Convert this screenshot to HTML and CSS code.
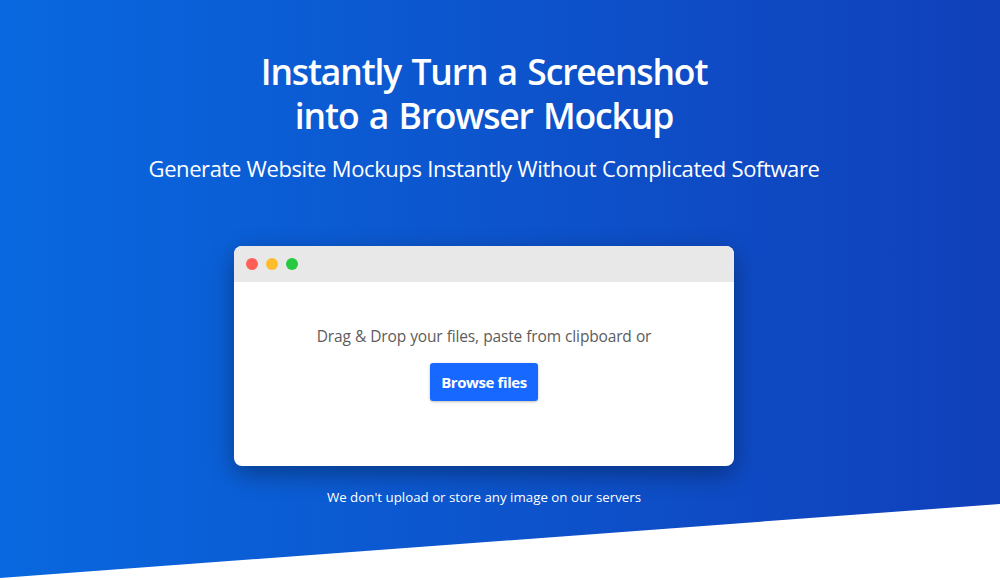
FILE: index.html
```html
<!DOCTYPE html>
<html lang="en">
<head>
<meta charset="utf-8">
<title>Browser Mockup</title>
<link rel="stylesheet" href="styles.css">
</head>
<body>
<main class="hero">
  <div class="content">
    <h1 class="title">Instantly Turn a Screenshot<br>into a Browser Mockup</h1>
    <p class="subtitle">Generate Website Mockups Instantly Without Complicated Software</p>
    <section class="window">
      <div class="titlebar"><i class="dot red"></i><i class="dot yellow"></i><i class="dot green"></i></div>
      <div class="dropzone">
        <p class="hint">Drag &amp; Drop your files, paste from clipboard or</p>
        <button class="browse" type="button">Browse files</button>
      </div>
    </section>
    <p class="note">We don't upload or store any image on our servers</p>
  </div>
</main>
</body>
</html>
```
FILE: styles.css
```css
* { box-sizing: border-box; }
body {
  margin: 0;
  height: 580px;
  overflow: hidden;
  background: #fff;
  font-family: "Segoe UI", "Open Sans", "Noto Sans", sans-serif;
}
.hero {
  height: 578px;
  background: linear-gradient(90deg, #0968df, #1040ba);
  clip-path: polygon(0 0, 100% 0, 100% 504px, 0 100%);
  color: #fff;
}
.content {
  width: 968px;
  padding-top: 49px;
  display: flex;
  flex-direction: column;
  align-items: center;
  white-space: nowrap;
}
.title { margin: 0; font-size: 35.5px; line-height: 44px; font-weight: 600; text-align: center; letter-spacing: -1.15px; word-spacing: 2.2px; }
.subtitle { margin: 15px 0 0; font-size: 22px; line-height: 32px; letter-spacing: -0.42px; word-spacing: 0.5px; }
.window {
  width: 500px;
  height: 220px;
  margin-top: 62px;
  border-radius: 8px;
  overflow: hidden;
  background: #fff;
  box-shadow: 0 8px 24px rgba(0, 0, 0, .35);
}
.titlebar { height: 36px; padding: 0 12px; display: flex; align-items: center; gap: 8px; background: #e8e8e8; }
.dot { width: 12px; height: 12px; border-radius: 50%; }
.red { background: #ff5f56; }
.yellow { background: #ffbd2e; }
.green { background: #27c93f; }
.dropzone { padding-top: 42px; display: flex; flex-direction: column; align-items: center; }
.hint { margin: 0; font-size: 15.5px; line-height: 24px; letter-spacing: -0.15px; word-spacing: 0.3px; color: #5c5c5c; }
.browse {
  width: 108px;
  height: 38px;
  margin-top: 15px;
  padding: 0;
  border: 0;
  border-radius: 3px;
  background: #1768ff;
  box-shadow: 0 1px 3px rgba(0, 0, 0, .25);
  color: #fff;
  font: 700 15px "Segoe UI", "Open Sans", sans-serif;
  letter-spacing: -0.4px;
}
.note { margin: 21px 0 0; font-size: 13.3px; line-height: 20px; }
```
